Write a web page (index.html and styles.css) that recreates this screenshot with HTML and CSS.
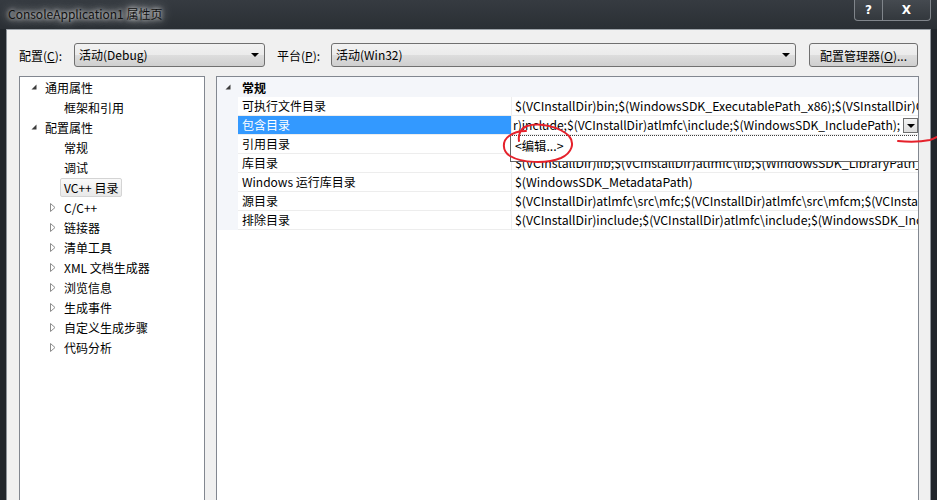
FILE: index.html
```html
<!DOCTYPE html>
<html lang="zh-CN">

<head>
    <meta charset="UTF-8">
    <title>ConsoleApplication1 属性页</title>
    <link rel="stylesheet" href="styles.css">
</head>

<body>
    <div class="window">
        <div class="titlebar">
            <span class="title">ConsoleApplication1 属性页</span>
            <div class="caption">
                <span class="cap cap-help">?</span>
                <span class="cap cap-close">X</span>
            </div>
        </div>

        <div class="client">
            <div class="toolbar">
                <label class="tb-label cfg-label">配置(<u>C</u>):</label>
                <div class="combo combo-config">活动(Debug)<span class="combo-arrow"></span></div>
                <label class="tb-label plat-label">平台(<u>P</u>):</label>
                <div class="combo combo-platform">活动(Win32)<span class="combo-arrow"></span></div>
                <button class="btn" type="button">配置管理器(<u>O</u>)...</button>
            </div>

            <div class="panes">
                <!-- left tree -->
                <div class="tree">
                    <div class="tree-item lvl0">
                        <span class="twisty"><svg width="6" height="6"><polygon points="5.5,0.5 5.5,5.5 0.5,5.5" fill="#3c3c3c"/></svg></span>
                        <span class="label">通用属性</span>
                    </div>
                    <div class="tree-item lvl1"><span class="twisty"></span><span class="label">框架和引用</span></div>
                    <div class="tree-item lvl0">
                        <span class="twisty"><svg width="6" height="6"><polygon points="5.5,0.5 5.5,5.5 0.5,5.5" fill="#3c3c3c"/></svg></span>
                        <span class="label">配置属性</span>
                    </div>
                    <div class="tree-item lvl1"><span class="twisty"></span><span class="label">常规</span></div>
                    <div class="tree-item lvl1"><span class="twisty"></span><span class="label">调试</span></div>
                    <div class="tree-item lvl1"><span class="twisty"></span><span class="label current">VC++ 目录</span></div>
                    <div class="tree-item lvl1"><span class="twisty"><svg width="6" height="9"><polygon points="0.5,0.5 5,4.5 0.5,8.5" fill="#fff" stroke="#8c8c8c"/></svg></span><span class="label">C/C++</span></div>
                    <div class="tree-item lvl1"><span class="twisty"><svg width="6" height="9"><polygon points="0.5,0.5 5,4.5 0.5,8.5" fill="#fff" stroke="#8c8c8c"/></svg></span><span class="label">链接器</span></div>
                    <div class="tree-item lvl1"><span class="twisty"><svg width="6" height="9"><polygon points="0.5,0.5 5,4.5 0.5,8.5" fill="#fff" stroke="#8c8c8c"/></svg></span><span class="label">清单工具</span></div>
                    <div class="tree-item lvl1"><span class="twisty"><svg width="6" height="9"><polygon points="0.5,0.5 5,4.5 0.5,8.5" fill="#fff" stroke="#8c8c8c"/></svg></span><span class="label">XML 文档生成器</span></div>
                    <div class="tree-item lvl1"><span class="twisty"><svg width="6" height="9"><polygon points="0.5,0.5 5,4.5 0.5,8.5" fill="#fff" stroke="#8c8c8c"/></svg></span><span class="label">浏览信息</span></div>
                    <div class="tree-item lvl1"><span class="twisty"><svg width="6" height="9"><polygon points="0.5,0.5 5,4.5 0.5,8.5" fill="#fff" stroke="#8c8c8c"/></svg></span><span class="label">生成事件</span></div>
                    <div class="tree-item lvl1"><span class="twisty"><svg width="6" height="9"><polygon points="0.5,0.5 5,4.5 0.5,8.5" fill="#fff" stroke="#8c8c8c"/></svg></span><span class="label">自定义生成步骤</span></div>
                    <div class="tree-item lvl1"><span class="twisty"><svg width="6" height="9"><polygon points="0.5,0.5 5,4.5 0.5,8.5" fill="#fff" stroke="#8c8c8c"/></svg></span><span class="label">代码分析</span></div>
                </div>

                <!-- property grid -->
                <div class="grid">
                    <div class="grid-head">
                        <span class="gutter"><svg width="6" height="6"><polygon points="5.5,0.5 5.5,5.5 0.5,5.5" fill="#3c3c3c"/></svg></span>
                        <span class="head-title">常规</span>
                    </div>
                    <div class="prop-row">
                        <span class="gutter"></span>
                        <span class="prop-name">可执行文件目录</span>
                        <span class="prop-value">$(VCInstallDir)bin;$(WindowsSDK_ExecutablePath_x86);$(VSInstallDir)Common7\Tools\bin;$(VSInstallDir)Common7\tools;$(VSInstallDir)Common7\ide</span>
                    </div>
                    <div class="prop-row selected">
                        <span class="gutter"></span>
                        <span class="prop-name">包含目录</span>
                        <span class="prop-value editing">
                            <span class="edit-text">r)include;$(VCInstallDir)atlmfc\include;$(WindowsSDK_IncludePath);</span>
                            <span class="drop-btn"></span>
                        </span>
                    </div>
                    <div class="prop-row">
                        <span class="gutter"></span>
                        <span class="prop-name">引用目录</span>
                        <span class="prop-value">$(VCInstallDir)atlmfc\lib;$(VCInstallDir)lib</span>
                    </div>
                    <div class="prop-row">
                        <span class="gutter"></span>
                        <span class="prop-name">库目录</span>
                        <span class="prop-value">$(VCInstallDir)lib;$(VCInstallDir)atlmfc\lib;$(WindowsSDK_LibraryPath_x86);</span>
                    </div>
                    <div class="prop-row">
                        <span class="gutter"></span>
                        <span class="prop-name">Windows 运行库目录</span>
                        <span class="prop-value">$(WindowsSDK_MetadataPath)</span>
                    </div>
                    <div class="prop-row">
                        <span class="gutter"></span>
                        <span class="prop-name">源目录</span>
                        <span class="prop-value">$(VCInstallDir)atlmfc\src\mfc;$(VCInstallDir)atlmfc\src\mfcm;$(VCInstallDir)atlmfc\src\atl;$(VCInstallDir)crt\src;</span>
                    </div>
                    <div class="prop-row">
                        <span class="gutter"></span>
                        <span class="prop-name">排除目录</span>
                        <span class="prop-value">$(VCInstallDir)include;$(VCInstallDir)atlmfc\include;$(WindowsSDK_IncludePath);$(MSBuildToolsPath32);</span>
                    </div>

                    <div class="dropdown">&lt;编辑...&gt;</div>
                </div>
            </div>
        </div>

        <!-- red pen marks on top of the screenshot -->
        <svg class="ink" width="937" height="500">
            <path d="M519,141 C518,134 521,128 527,126 C540,122 560,127 569,136 C575,143 572,153 561,158 C546,164 522,163 510,156 C502,151 502,141 509,136 C514,132 520,131 526,131" />
            <path d="M898,141 C908,142 920,142 930,140 C933,139 935,138 937,137" />
        </svg>
    </div>
</body>

</html>
```

FILE: styles.css
```css
/* General */
* {
    box-sizing: border-box;
}

body {
    margin: 0;
    font-family: "Noto Sans CJK SC", "Microsoft YaHei", sans-serif;
    font-size: 12px;
    color: #000;
}

.window {
    position: relative;
    width: 937px;
    height: 500px;
    overflow: hidden;
    display: flex;
    flex-direction: column;
    padding: 0 7px;
    background: #21262b;
}

/* Title bar */
.titlebar {
    flex: none;
    height: 29px;
    margin: 0 -7px;
    padding: 0 6px 0 8px;
    display: flex;
    justify-content: space-between;
    align-items: flex-start;
    background: linear-gradient(#363b41, #2a2f34);
}

.title {
    line-height: 28px;
    font-size: 12px;
    color: #111;
    text-shadow: 0 0 4px rgba(255, 255, 255, 0.9), 0 0 9px rgba(255, 255, 255, 0.7), 0 0 14px rgba(255, 255, 255, 0.5);
}

.caption {
    display: flex;
}

.cap {
    height: 21px;
    display: flex;
    align-items: center;
    justify-content: center;
    color: #fff;
    font-family: "DejaVu Sans", sans-serif;
    font-weight: bold;
    font-size: 12px;
    border: 1px solid #80858b;
    border-top: none;
    background: linear-gradient(#454a50, #33383d);
}

.cap-help {
    width: 29px;
    border-radius: 0 0 0 4px;
}

.cap-close {
    width: 48px;
    border-left: none;
    border-radius: 0 0 4px 0;
}

/* Client area */
.client {
    flex: 1;
    min-height: 0;
    min-width: 0;
    display: flex;
    flex-direction: column;
    background: #f0f0f0;
    border-top: 1px solid #9ea4aa;
    box-shadow: -1px 0 0 #8d9399, 1px 0 0 #8d9399;
}

.toolbar {
    flex: none;
    display: flex;
    align-items: center;
    padding: 13px 0 0 12px;
}

.tb-label {
    white-space: nowrap;
}

.cfg-label {
    width: 55px;
}

.plat-label {
    width: 54px;
    margin-left: 12px;
}

.combo,
.btn {
    position: relative;
    height: 24px;
    border: 1px solid #707070;
    border-radius: 3px;
    background: linear-gradient(#f2f2f2 0%, #ebebeb 50%, #dddddd 51%, #cfcfcf 100%);
    font-family: inherit;
    font-size: 12px;
    color: #000;
}

.combo {
    padding-left: 4px;
    line-height: 22px;
}

.combo-config {
    width: 191px;
}

.combo-platform {
    width: 465px;
}

.combo-arrow {
    position: absolute;
    right: 5px;
    top: 9px;
    border-left: 4px solid transparent;
    border-right: 4px solid transparent;
    border-top: 4px solid #000;
}

.btn {
    width: 109px;
    margin-left: 13px;
    padding: 0;
}

/* Panes */
.panes {
    flex: 1;
    min-height: 0;
    display: flex;
    gap: 11px;
    margin-top: 9px;
    padding: 0 11px 0 12px;
}

.tree {
    width: 186px;
    flex: none;
    background: #fff;
    border: 1px solid #828790;
    border-bottom: none;
}

.tree-item {
    display: flex;
    align-items: center;
    height: 20px;
    white-space: nowrap;
}

.lvl0 {
    padding-left: 8px;
}

.lvl1 {
    padding-left: 27px;
}

.twisty {
    width: 12px;
    margin-right: 5px;
    display: flex;
    align-items: center;
    justify-content: center;
}

.label.current {
    height: 19px;
    line-height: 17px;
    margin-left: -4px;
    padding: 0 3px;
    border: 1px solid #d4d4d4;
    border-radius: 2px;
    background: linear-gradient(#fafafa, #e9e9e9);
}

/* Property grid */
.grid {
    position: relative;
    flex: 1;
    min-width: 0;
    overflow: hidden;
    background: #fff;
    border: 1px solid #828790;
    border-bottom: none;
}

.grid-head {
    display: flex;
    align-items: center;
    height: 20px;
    background: #f4f6fa;
}

.grid-head .gutter {
    display: flex;
    justify-content: center;
    align-items: center;
}

.head-title {
    padding-left: 4px;
    font-weight: bold;
}

.gutter {
    width: 21px;
    flex: none;
    align-self: stretch;
}

.prop-row {
    display: flex;
    height: 19px;
}

.prop-row .gutter {
    background: #f4f6fa;
}

.prop-name {
    width: 274px;
    flex: none;
    padding-left: 4px;
    line-height: 18px;
    white-space: nowrap;
    border-right: 1px solid #ededed;
    border-bottom: 1px solid #ededed;
}

.prop-value {
    flex: 1;
    min-width: 0;
    padding-left: 3px;
    font-size: 12.3px;
    line-height: 18px;
    white-space: nowrap;
    overflow: hidden;
    border-bottom: 1px solid #ededed;
}

.prop-row.selected .prop-name {
    background: #3399ff;
    color: #fff;
}

.prop-value.editing {
    display: flex;
    align-items: center;
    padding-left: 1px;
}

.edit-text {
    flex: 1;
    min-width: 0;
    overflow: hidden;
    font-size: 12.1px;
}

.drop-btn {
    position: relative;
    flex: none;
    width: 15px;
    height: 15px;
    border: 1px solid #6f6f6f;
    background: linear-gradient(#f4f4f4, #dcdcdc);
}

.drop-btn::after {
    content: "";
    position: absolute;
    left: 3px;
    top: 5px;
    border-left: 4px solid transparent;
    border-right: 4px solid transparent;
    border-top: 4px solid #000;
}

.dropdown {
    position: absolute;
    left: 293px;
    top: 58px;
    width: 409px;
    height: 27px;
    padding-left: 4px;
    font-size: 12.3px;
    line-height: 21px;
    background: #fff;
    border-left: 1px solid #646464;
    border-bottom: 1px solid #646464;
    border-top: 1px dotted #3c3c3c;
    border-right: 1px dotted #3c3c3c;
}

/* Pen marks */
.ink {
    position: absolute;
    left: 0;
    top: 0;
    z-index: 2;
    pointer-events: none;
}

.ink path {
    fill: none;
    stroke: #e5212b;
    stroke-width: 2;
    stroke-linecap: round;
}
```
